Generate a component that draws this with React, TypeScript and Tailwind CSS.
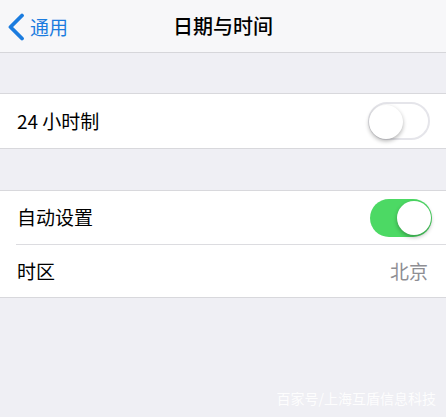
import React from "react";

const font = { fontFamily: '"Noto Sans CJK SC", "Noto Sans", sans-serif' };

function Toggle({ on }: { on: boolean }) {
  return (
    <div
      className={`relative w-[62px] h-[38px] rounded-full ${
        on ? "bg-[#4cd964]" : "bg-white border-2 border-[#e5e5ea]"
      }`}
    >
      <div
        className={`absolute top-[1px] w-[34px] h-[34px] rounded-full bg-white shadow-[0_2px_4px_rgba(0,0,0,0.3)] ${
          on ? "right-[1px] top-[2px]" : "left-[-1px] top-[-1px]"
        }`}
      />
    </div>
  );
}

export default function App() {
  return (
    <div className="w-[446px] h-[417px] bg-[#efeff4] flex flex-col relative overflow-hidden" style={font}>
      <div className="h-[53px] bg-[#f7f7f9] border-b border-[#d6d6da] flex items-center relative">
        <div className="flex items-center pl-[7px] text-[#1b7cdf]">
          <svg width="18" height="28" viewBox="0 0 18 28" className="mt-[1px]">
            <path d="M15 2.5 L3.5 14 L15 25.5" fill="none" stroke="#1b7cdf" strokeWidth="3.8" strokeLinecap="round" strokeLinejoin="round" />
          </svg>
          <span className="ml-[5px] text-[19px] leading-none">通用</span>
        </div>
        <div className="absolute left-0 right-0 text-center text-[20px] font-medium text-black leading-none pointer-events-none">
          日期与时间
        </div>
      </div>
      <div className="h-[40px]" />
      <div className="bg-white border-y border-[#d8d8dc] h-[56px] flex items-center justify-between pl-[17px] pr-[16px]">
        <span className="text-[19px] text-black">24 小时制</span>
        <Toggle on={false} />
      </div>
      <div className="h-[41px]" />
      <div className="bg-white border-y border-[#d8d8dc]">
        <div className="h-[53px] flex items-center justify-between pl-[17px] pr-[14px]">
          <span className="text-[19px] text-black">自动设置</span>
          <Toggle on={true} />
        </div>
        <div className="ml-[16px] h-px bg-[#dcdce0]" />
        <div className="h-[52px] flex items-center justify-between pl-[17px] pr-[18px]">
          <span className="text-[19px] text-black">时区</span>
          <span className="text-[19px] text-[#8e8e93]">北京</span>
        </div>
      </div>
      <div className="absolute right-[10px] bottom-[8px] text-[14px] text-white opacity-90">
        百家号/上海互盾信息科技
      </div>
    </div>
  );
}
